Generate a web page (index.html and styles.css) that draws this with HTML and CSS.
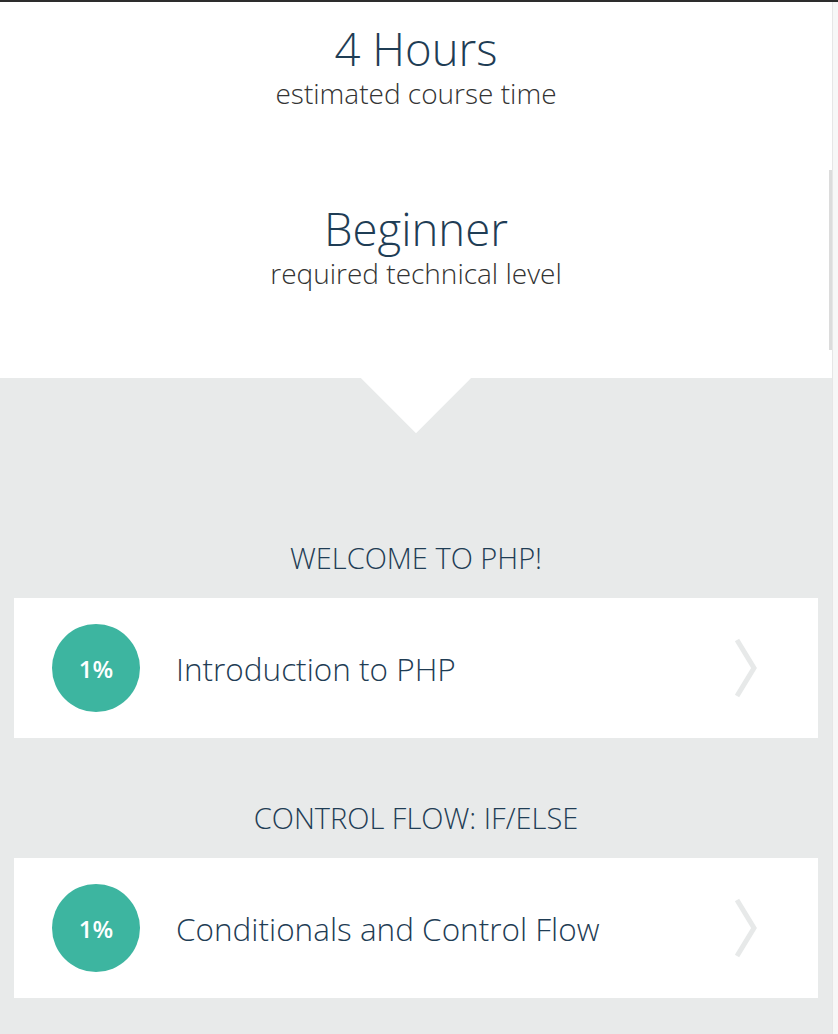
FILE: index.html
```html
<!DOCTYPE html>
<html lang="en">
<head>
<meta charset="utf-8">
<title>PHP Course</title>
<link rel="stylesheet" href="styles.css">
</head>
<body>
<div class="frame">
  <main class="main">
    <header class="hero">
      <div class="stat">
        <div class="stat-value">4 Hours</div>
        <div class="stat-label">estimated course time</div>
      </div>
      <div class="stat stat-second">
        <div class="stat-value">Beginner</div>
        <div class="stat-label">required technical level</div>
      </div>
    </header>
    <section class="syllabus">
      <h2 class="unit-title">WELCOME TO PHP!</h2>
      <a class="lesson" href="#">
        <span class="badge">1%</span>
        <span class="lesson-title">Introduction to PHP</span>
        <svg class="chevron" viewBox="0 0 24 60" width="24" height="60" aria-hidden="true"><polyline points="3,2 20,30 3,58" fill="none" stroke="#e7e9e9" stroke-width="5"/></svg>
      </a>
      <h2 class="unit-title">CONTROL FLOW: IF/ELSE</h2>
      <a class="lesson" href="#">
        <span class="badge">1%</span>
        <span class="lesson-title">Conditionals and Control Flow</span>
        <svg class="chevron" viewBox="0 0 24 60" width="24" height="60" aria-hidden="true"><polyline points="3,2 20,30 3,58" fill="none" stroke="#e7e9e9" stroke-width="5"/></svg>
      </a>
    </section>
    <div class="scroll-thumb"></div>
  </main>
  <div class="rail"></div>
</div>
</body>
</html>
```

FILE: styles.css
```css
html, body {
  margin: 0;
  padding: 0;
}
body {
  border-top: 2px solid #2d2d2d;
  background: #e8eaea;
  font-family: "Open Sans", "Liberation Sans", sans-serif;
  height: 1032px;
  overflow: hidden;
}
.frame {
  display: flex;
  height: 100%;
}
.main {
  flex: 1;
  position: relative;
  background: #e8eaea;
}
.rail {
  width: 5px;
  background: #f7f7f7;
  border-left: 1px solid #e6e6e6;
}
.scroll-thumb {
  position: absolute;
  right: 0;
  top: 168px;
  width: 3px;
  height: 180px;
  background: #dcdcdc;
}
.hero {
  position: relative;
  background: #fff;
  padding: 22px 0 86px;
  display: flex;
  flex-direction: column;
  align-items: center;
  gap: 92px;
}
.hero::after {
  content: "";
  position: absolute;
  left: calc(50% - 39px);
  bottom: -39px;
  width: 78px;
  height: 78px;
  background: #fff;
  transform: rotate(45deg);
}
.stat {
  text-align: center;
}
.stat-value {
  font-size: 45.5px;
  line-height: 48px;
  font-weight: 300;
  color: #1f3d55;
}
.stat-label {
  font-size: 28px;
  line-height: 38px;
  font-weight: 300;
  color: #333;
  margin-top: 2px;
}
.syllabus {
  padding: 164px 14px 0;
  display: flex;
  flex-direction: column;
}
.unit-title {
  margin: 0 0 24px;
  font-size: 29px;
  line-height: 32px;
  font-weight: 300;
  color: #1f3d55;
  text-align: center;
}
.lesson {
  display: flex;
  align-items: center;
  height: 140px;
  background: #fff;
  padding: 0 60px 0 38px;
  margin-bottom: 64px;
  text-decoration: none;
}
.badge {
  flex: none;
  width: 88px;
  height: 88px;
  border-radius: 50%;
  background: #3db5a0;
  color: #fff;
  font-size: 24px;
  font-weight: 600;
  display: flex;
  align-items: center;
  justify-content: center;
}
.lesson-title {
  flex: 1;
  margin-left: 36px;
  font-size: 31.5px;
  font-weight: 300;
  color: #1f3d55;
}
.chevron {
  flex: none;
  display: block;
}
```
